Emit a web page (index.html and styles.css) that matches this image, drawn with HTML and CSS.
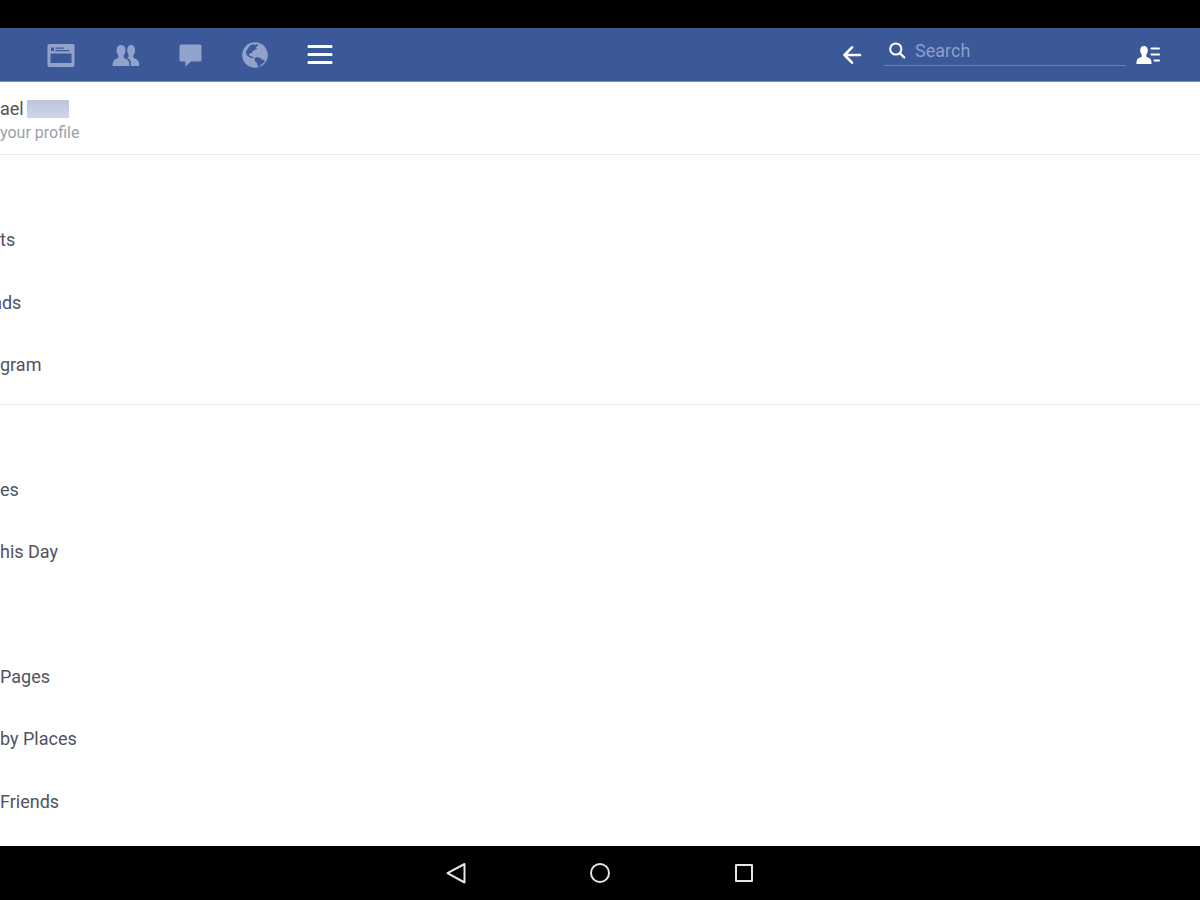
FILE: index.html
```html
<!DOCTYPE html>
<html lang="en">

<head>
    <meta charset="UTF-8">
    <meta name="viewport" content="width=device-width, initial-scale=1.0">
    <title>Menu</title>
    <link rel="stylesheet" href="styles.css">
</head>

<body>
    <div class="status-bar"></div>

    <header class="top-bar">
        <nav class="tabs" aria-label="Main">
            <button class="tab" type="button" aria-label="News feed">
                <svg viewBox="0 0 28 28" width="28" height="28">
                    <path fill="currentColor" fill-rule="evenodd" d="M2 3h24a1.500 1.500 0 0 1 1.500 1.500v20A1.500 1.500 0 0 1 26 26H2a1.500 1.500 0 0 1-1.500-1.500v-20A1.500 1.500 0 0 1 2 3zM3.500 12.500v9.500h21v-9.500zM4 6.500v3.500h3V6.500zM8.500 6.500v1.200h8V6.500zM8.500 9v1.200h14V9z"/>
                </svg>
            </button>
            <button class="tab" type="button" aria-label="Friend requests">
                <svg viewBox="0 0 28 28" width="28" height="28">
                    <path fill="currentColor" d="M9 4c3 0 4.500 2 4.500 5 0 2.200-.7 4-1.800 5.200v2.300c0 .8 4 1.600 5 3.700.6 1.300.8 3 .8 4.800H.5c0-1.800.2-3.500.8-4.800 1-2.100 5-2.900 5-3.700v-2.300C5.200 13 4.500 11.200 4.500 9c0-3 1.500-5 4.500-5z"/>
                    <path fill="currentColor" d="M19 4c2.700 0 4 2 4 5 0 2.200-.6 4-1.600 5.200v2.300c0 .8 4 1.600 5 3.700.6 1.300.8 3 .8 4.800H19c0-3-.4-5.500-2-6.900-.7-.7-1.500-1.100-2-1.400 1-.3 1.500-.8 1.500-1.200v-2c-.8-.9-1.300-3-1.300-4.500C15.200 6 16.500 4 19 4z"/>
                </svg>
            </button>
            <button class="tab" type="button" aria-label="Messages">
                <svg viewBox="0 0 28 28" width="28" height="28">
                    <path fill="currentColor" d="M4 3.500h19a1.500 1.500 0 0 1 1.500 1.500v14A1.500 1.500 0 0 1 23 20.500h-9L8.300 25.500v-5H4A1.500 1.500 0 0 1 2.500 19V5A1.500 1.500 0 0 1 4 3.500z"/>
                </svg>
            </button>
            <button class="tab" type="button" aria-label="Notifications">
                <svg viewBox="0 0 28 28" width="28" height="28">
                    <circle cx="13" cy="14" r="12.800" fill="currentColor"/>
                    <path class="land" d="M8 4.500l3.500-1.500 1 1.200 3-1.200.8 1.300-2.300 2 1 1.700-3.500 1.500-2 2.700-2.500.3.500 2.200 2.500.8 1.500 1-.5.800-3.500-1-3-2.300-.5-3.500z"/>
                    <path class="land" d="M12.500 17l2.500-1 3.500 1 1.500 1.500 3 .8-.8 2.200-2.700 1.500-1.500 2.500-2 .3-.8-3.300-2.200-2.500z"/>
                </svg>
            </button>
            <button class="tab active" type="button" aria-label="Menu" aria-current="page">
                <svg viewBox="0 0 28 28" width="28" height="28">
                    <path stroke="currentColor" stroke-width="3.200" stroke-linecap="round" d="M2 5.500h22M2 13.500h22M2 21.500h22"/>
                </svg>
            </button>
        </nav>

        <form class="search-area" role="search">
            <button class="action" type="button" aria-label="Back">
                <svg viewBox="0 0 24 24" width="24" height="24">
                    <path fill="none" stroke="currentColor" stroke-width="2.600" stroke-linecap="round" stroke-linejoin="round" d="M20 12H4.500M12 4.300L4.500 12l7.500 7.700"/>
                </svg>
            </button>
            <label class="search">
                <svg viewBox="0 0 18 18" width="18" height="18" aria-hidden="true">
                    <circle cx="6.800" cy="7" r="5.600" fill="none" stroke="currentColor" stroke-width="2"/>
                    <path stroke="currentColor" stroke-width="2.400" stroke-linecap="round" d="M11.200 11.500l4 4"/>
                </svg>
                <input type="text" placeholder="Search" aria-label="Search">
            </label>
            <button class="action" type="button" aria-label="Contacts">
                <svg viewBox="0 0 24 24" width="24" height="24">
                    <path fill="currentColor" d="M8 3c2.600 0 3.800 1.700 3.800 4.300 0 1.900-.6 3.300-1.500 4.300v2c0 .8 3.700 1.300 4.600 3.100.5 1.100.7 2.800.7 4.300H.4c0-1.500.2-3.200.7-4.300.9-1.800 4.600-2.300 4.600-3.100v-2C4.800 10.600 4.200 9.200 4.200 7.300 4.200 4.700 5.400 3 8 3z"/>
                    <path stroke="currentColor" stroke-width="2" stroke-linecap="round" d="M15.500 5.500H23M15.500 11.500H23M18.500 17.500H23"/>
                </svg>
            </button>
        </form>
    </header>

    <main class="menu">
        <a class="profile" href="#">
            <span class="name">ael <span class="redacted"></span></span>
            <span class="hint">your profile</span>
        </a>

        <ul class="section favorites">
            <li><a href="#">ts</a></li>
            <li><a class="cut" href="#">nds</a></li>
            <li><a href="#">gram</a></li>
        </ul>

        <ul class="section apps">
            <li><a href="#">es</a></li>
            <li><a href="#">his Day</a></li>
            <li></li>
            <li><a href="#">Pages</a></li>
            <li><a href="#">by Places</a></li>
            <li><a href="#">Friends</a></li>
        </ul>
    </main>

    <nav class="system-bar" aria-label="System">
        <button type="button" aria-label="Back">
            <svg viewBox="0 0 24 24" width="24" height="24">
                <path fill="none" stroke="currentColor" stroke-width="2" stroke-linejoin="round" d="M20.500 3v18.500L3.500 12.200z"/>
            </svg>
        </button>
        <button type="button" aria-label="Home">
            <svg viewBox="0 0 24 24" width="24" height="24">
                <circle cx="12" cy="12" r="9" fill="none" stroke="currentColor" stroke-width="2"/>
            </svg>
        </button>
        <button type="button" aria-label="Recent apps">
            <svg viewBox="0 0 24 24" width="24" height="24">
                <rect x="4" y="4" width="16" height="16" fill="none" stroke="currentColor" stroke-width="2" stroke-linejoin="round"/>
            </svg>
        </button>
    </nav>
</body>

</html>
```
FILE: styles.css
```css
* {
    box-sizing: border-box;
}

body {
    margin: 0;
    min-height: 100vh;
    display: flex;
    flex-direction: column;
    background: #fff;
    color: #50535f;
    font-family: Roboto, sans-serif;
    font-size: 18px;
    line-height: 24px;
}

button {
    padding: 0;
    border: 0;
    background: none;
    color: inherit;
}

svg {
    display: block;
}

a {
    color: inherit;
    text-decoration: none;
}

.status-bar {
    height: 28px;
    background: #000;
}

.top-bar {
    height: 54px;
    display: flex;
    align-items: center;
    justify-content: space-between;
    padding: 0 40px 0 47px;
    background: #3b5998;
    border-bottom: 1px solid #8095c2;
    color: #fff;
}

.tabs {
    display: flex;
    gap: 37px;
}

.tab {
    color: #91a2cb;
}

.tab.active {
    color: #fff;
}

.land {
    fill: #3b5998;
}

.search-area {
    display: flex;
    align-items: center;
    width: 320px;
}

.search {
    flex: 1;
    min-width: 0;
    display: flex;
    align-items: center;
    gap: 8px;
    height: 28px;
    margin: 0 10px 6px 20px;
    padding: 0 5px;
    border-bottom: 1px solid #6680b5;
}

.search input {
    flex: 1;
    min-width: 0;
    padding: 0;
    border: 0;
    outline: 0;
    background: none;
    color: #fff;
    font: inherit;
}

.search input::placeholder {
    color: #8c9fca;
    opacity: 1;
}

.menu {
    flex: 1;
    display: flex;
    flex-direction: column;
    overflow: hidden;
}

.profile {
    display: flex;
    flex-direction: column;
    padding: 15px 0 10px;
    border-bottom: 1px solid #e9eaed;
}

.name {
    display: flex;
    align-items: center;
    gap: 3px;
}

.redacted {
    width: 42px;
    height: 18px;
    background: linear-gradient(#bcc5dc, #d0d6e8);
}

.hint {
    color: #9a9fab;
    font-size: 16px;
    line-height: 23px;
}

.section {
    display: flex;
    flex-direction: column;
    margin: 0;
    list-style: none;
}

.favorites {
    flex: 3 0 62px;
    padding: 54px 0 8px;
    border-bottom: 1px solid #e9eaed;
}

.apps {
    flex: 6 0 66px;
    padding: 53px 0 13px;
}

.section li {
    flex: 1;
    display: flex;
    align-items: center;
}

/* label scrolled partly past the left edge */
.cut {
    margin-left: -8px;
}

.system-bar {
    height: 54px;
    display: flex;
    align-items: center;
    justify-content: center;
    gap: 120px;
    background: #000;
    color: #e6e6e6;
}
```
